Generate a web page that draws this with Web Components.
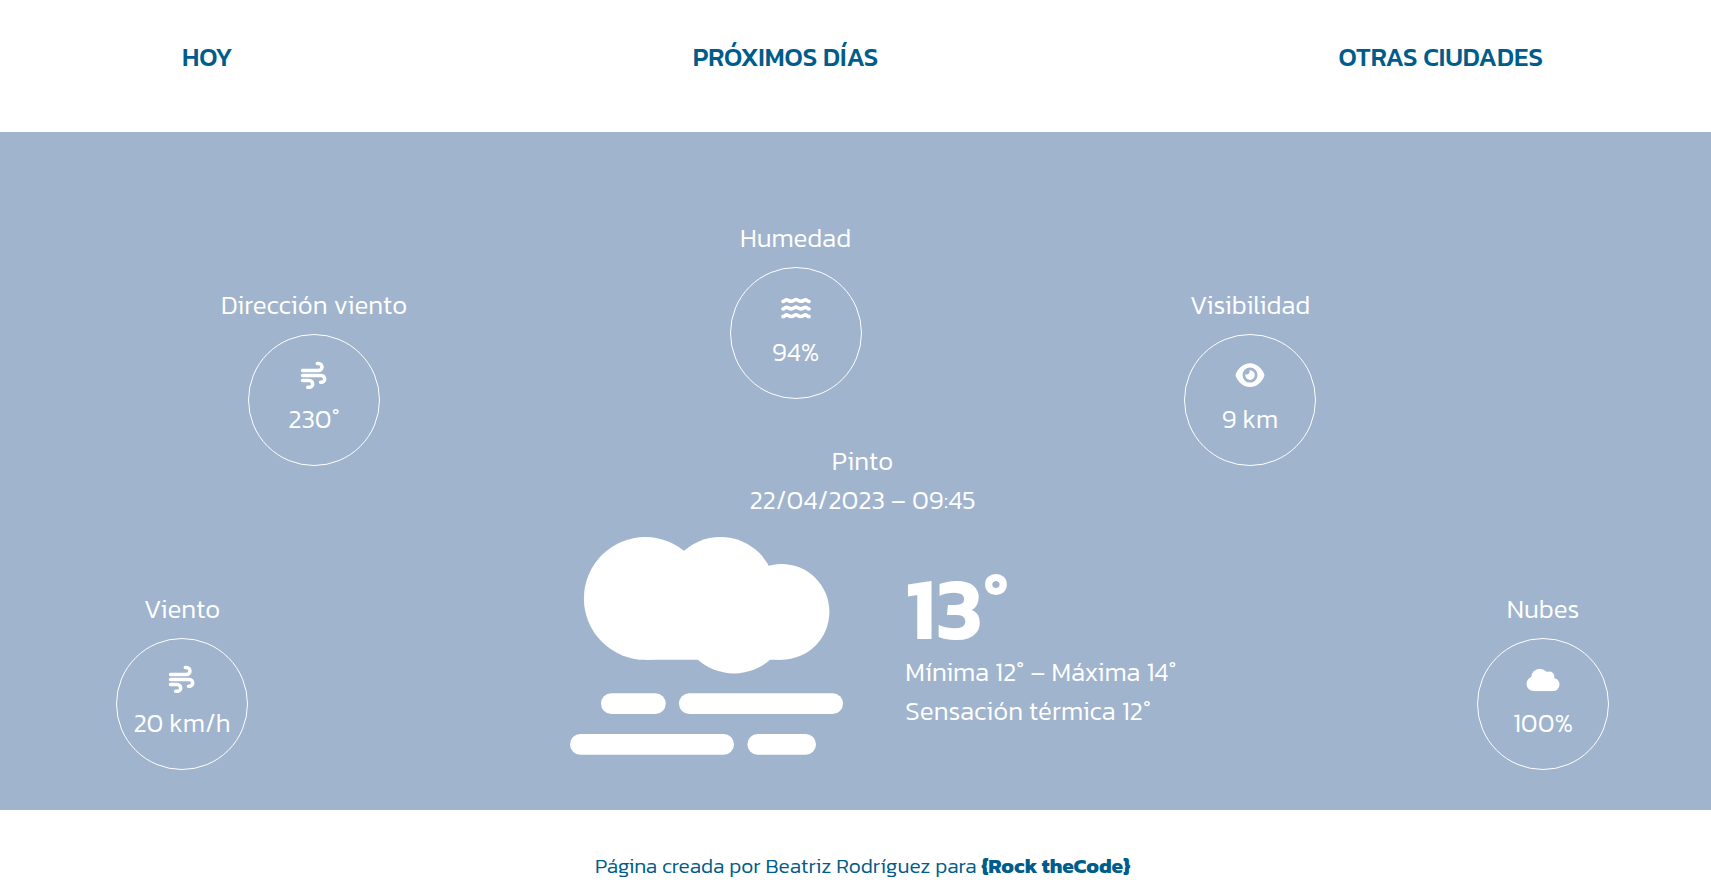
<!DOCTYPE html>
<html lang="es">
<head>
<meta charset="utf-8">
<meta name="viewport" content="width=device-width, initial-scale=1">
<title>El tiempo en Pinto</title>
<style>
  body {
    margin: 0;
    background: #fff;
    font-family: Kanit, "Noto Sans", sans-serif;
    font-weight: 300;
    font-size: 26px;
    line-height: 39px;
    --brand: #005c8a;
    --sky: #a0b4ce;
  }
</style>
</head>
<body>
<weather-app></weather-app>

<template id="app-tpl">
  <style>
    :host { display: flex; flex-direction: column; min-height: 100vh; }
    main {
      background: var(--sky);
      color: #fff;
      padding: 86px 102px 40px 116px;
    }
    .upper {
      display: flex;
      justify-content: space-between;
      align-items: flex-end;
      padding: 0 293px 0 105px;
      margin-bottom: -25px;
    }
    .upper weather-stat:nth-child(2) { align-self: flex-start; margin-bottom: 67px; }
    .lower {
      display: flex;
      justify-content: space-between;
      align-items: flex-end;
    }
  </style>
  <site-nav></site-nav>
  <main>
    <div class="upper">
      <weather-stat label="Dirección viento" icon="wind">230°</weather-stat>
      <weather-stat label="Humedad" icon="water">94%</weather-stat>
      <weather-stat label="Visibilidad" icon="eye">9 km</weather-stat>
    </div>
    <div class="lower">
      <weather-stat label="Viento" icon="wind">20 km/h</weather-stat>
      <weather-current>
        <span slot="city">Pinto</span>
        <span slot="date">22/04/2023 – 09:45</span>
        <span slot="temp">13°</span>
        <span slot="range">Mínima 12° – Máxima 14°</span>
        <span slot="feel">Sensación térmica 12°</span>
      </weather-current>
      <weather-stat label="Nubes" icon="cloud">100%</weather-stat>
    </div>
  </main>
  <site-footer></site-footer>
</template>

<template id="nav-tpl">
  <style>
    :host { display: block; }
    nav {
      display: flex;
      justify-content: space-between;
      padding: 37px 168px 56px 182px;
    }
    a { color: var(--brand); font-weight: 500; text-decoration: none; white-space: nowrap; }
  </style>
  <nav>
    <a href="#hoy">HOY</a>
    <a href="#proximos">PRÓXIMOS DÍAS</a>
    <a href="#ciudades">OTRAS CIUDADES</a>
  </nav>
</template>

<template id="stat-tpl">
  <style>
    :host {
      display: flex;
      flex-direction: column;
      align-items: center;
      gap: 10px;
      white-space: nowrap;
    }
    .ring {
      box-sizing: border-box;
      width: 132px;
      height: 132px;
      border: 1px solid #fff;
      border-radius: 50%;
      display: flex;
      flex-direction: column;
      align-items: center;
      justify-content: center;
      gap: 10px;
      padding-bottom: 1px;
    }
    svg { display: block; height: 28px; }
  </style>
  <span class="label" id="label"></span>
  <div class="ring" role="group" aria-labelledby="label">
    <span id="icon"></span>
    <slot></slot>
  </div>
</template>

<template id="current-tpl">
  <style>
    :host { display: flex; flex-direction: column; align-items: center; padding-bottom: 15px; white-space: nowrap; }
    .now { display: flex; align-items: center; gap: 41px; margin-top: 18px; }
    .text { display: flex; flex-direction: column; padding-top: 2px; }
    .temp { font-size: 88px; line-height: 88px; font-weight: 600; }
    ::slotted(span) { display: block; }
    svg { display: block; width: 316px; height: 218px; }
  </style>
  <slot name="city"></slot>
  <slot name="date"></slot>
  <div class="now">
    <svg viewBox="-22 0 316 218" fill="#fff" aria-hidden="true">
      <circle cx="75.3" cy="61.4" r="61.4"/>
      <circle cx="150.5" cy="55" r="55"/>
      <circle cx="211.5" cy="74.8" r="47.9"/>
      <circle cx="164" cy="82" r="54.5"/>
      <path d="M75 30H212V122.7H75z"/>
      <rect x="31" y="156.3" width="64.7" height="20.7" rx="10.3"/>
      <rect x="109" y="156.3" width="164" height="20.7" rx="10.3"/>
      <rect x="0" y="197.1" width="164" height="20.7" rx="10.3"/>
      <rect x="177.4" y="197.1" width="68.6" height="20.7" rx="10.3"/>
    </svg>
    <div class="text">
      <div class="temp"><slot name="temp"></slot></div>
      <slot name="range"></slot>
      <slot name="feel"></slot>
    </div>
  </div>
</template>

<template id="footer-tpl">
  <style>
    :host { display: block; color: var(--brand); }
    footer {
      padding: 39px 0 8px 14px;
      text-align: center;
      font-size: 21px;
      line-height: 33px;
      font-weight: 300;
    }
    a { color: inherit; text-decoration: none; font-weight: 700; }
  </style>
  <footer>Página creada por Beatriz Rodríguez para <a href="#rockthecode">{Rock theCode}</a></footer>
</template>

<script>
  const ICONS = {
    wind: `<svg width="28" viewBox="0 0 28 28" fill="none" stroke="#fff" stroke-width="3.5" stroke-linecap="round" stroke-linejoin="round">
      <path d="M2.5 9.5H18.5a3.5 3.5 0 0 0 0-7h-1.2"/>
      <path d="M2.5 14.5H21.3a3.4 3.4 0 0 1 0 6.8h-.8"/>
      <path d="M2.5 19.5H9.3a3.4 3.4 0 0 1 0 6.8H7.7"/></svg>`,
    water: `<svg width="30" viewBox="0 0 30 28" fill="none" stroke="#fff" stroke-width="3.6" stroke-linecap="round">
      <path d="M2 7.4C4 7 4.2 5.7 5.5 5.7s2.4 1.6 4.7 1.6S13.7 5.5 15 5.5s2.5 1.8 4.8 1.8 3.4-1.6 4.7-1.6S26 7 28 7.4"/>
      <path d="M2 15C4 14.6 4.2 13.3 5.5 13.3s2.4 1.6 4.7 1.6S13.7 13.1 15 13.1s2.5 1.8 4.8 1.8 3.4-1.6 4.7-1.6S26 14.6 28 15"/>
      <path d="M2 22.6C4 22.2 4.2 20.9 5.5 20.9s2.4 1.6 4.7 1.6S13.7 20.7 15 20.7s2.5 1.8 4.8 1.8 3.4-1.6 4.7-1.6S26 22.2 28 22.6"/></svg>`,
    eye: `<svg width="30" viewBox="0 0 30 28" fill="#fff">
      <path fill-rule="evenodd" d="M15 2.2C8.500 2.200 3 7.200.7 13.200a2.600 2.600 0 0 0 0 1.700C3 20.900 8.500 26 15 26s12-5.100 14.300-11.100a2.600 2.600 0 0 0 0-1.700C27 7.200 21.500 2.200 15 2.200zM15 6.600a7.500 7.500 0 1 1 0 15 7.500 7.500 0 0 1 0-15z"/>
      <path d="M15 9.300a4.800 4.800 0 1 1-4.800 4.800c0-.2 0-.5.1-.7 2.700.9 5-1.300 4.200-4.100z"/></svg>`,
    cloud: `<svg width="34" viewBox="0 0 34 28" fill="#fff">
      <circle cx="13.8" cy="12.3" r="8.6"/><circle cx="23.3" cy="11.7" r="5.1"/>
      <circle cx="7.8" cy="18.8" r="7.3"/><circle cx="26.9" cy="19.5" r="6.6"/>
      <path d="M7.8 12.5H27V26.1H7.8z"/></svg>`
  };

  class TemplateElement extends HTMLElement {
    constructor() {
      super();
      const tpl = document.getElementById(this.constructor.template);
      this.attachShadow({ mode: 'open' }).append(tpl.content.cloneNode(true));
    }
  }

  customElements.define('weather-stat', class extends TemplateElement {
    static template = 'stat-tpl';
    connectedCallback() {
      this.shadowRoot.getElementById('label').textContent = this.getAttribute('label');
      this.shadowRoot.getElementById('icon').innerHTML = ICONS[this.getAttribute('icon')];
    }
  });
  customElements.define('weather-current', class extends TemplateElement { static template = 'current-tpl'; });
  customElements.define('site-nav', class extends TemplateElement { static template = 'nav-tpl'; });
  customElements.define('site-footer', class extends TemplateElement { static template = 'footer-tpl'; });
  customElements.define('weather-app', class extends TemplateElement { static template = 'app-tpl'; });
</script>
</body>
</html>
